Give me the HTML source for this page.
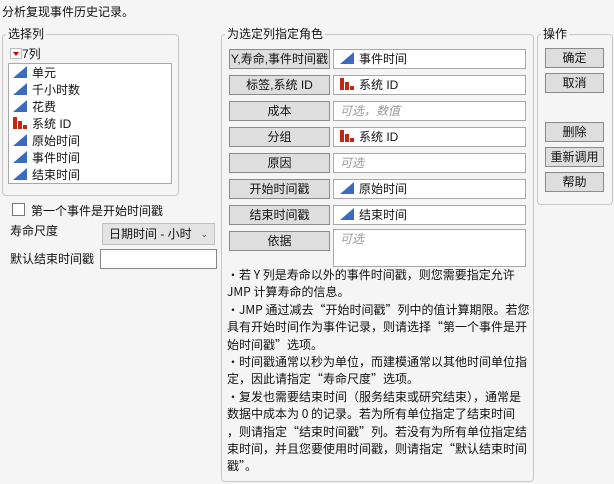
<!DOCTYPE html>
<html><head><meta charset="utf-8"><style>
*{box-sizing:border-box;margin:0;padding:0}
body{width:614px;height:484px;background:#f5f5f5;font-family:"Liberation Sans","Noto Sans CJK SC",sans-serif;font-size:12px;color:#111;position:relative;overflow:hidden}
.a{position:absolute;white-space:nowrap}
.frame{position:absolute;border:1px solid #c8c8c8;border-radius:4px}
.leg{position:absolute;background:#f5f5f5;padding:0 2px;line-height:14px}
.btn{position:absolute;background:#dedede;border:1px solid #8a8a8a;text-align:center;line-height:18px;white-space:nowrap;overflow:hidden}
.fld{position:absolute;background:#fff;border:1px solid #a8a8a8;line-height:18px;padding-left:6px;white-space:nowrap}
.ph{color:#999;font-style:italic}
.tri{display:inline-block;width:0;height:0;border-left:14px solid transparent;border-bottom:12px solid #3a6bbf;vertical-align:-1px;margin-right:5px}
.bar{display:inline-block;width:14px;height:12px;vertical-align:-1px;margin-right:5px;position:relative}
.bar i{position:absolute;bottom:0;background:#c8250e;width:4px}
.txt{position:absolute;left:227px;top:266px;line-height:17.4px;font-size:12px;white-space:nowrap;font-family:"Noto Sans CJK SC","Liberation Sans",sans-serif}
</style></head><body>
<div class="a" style="left:2px;top:3px">分析复现事件历史记录。</div>

<div class="frame" style="left:2px;top:34px;width:177px;height:162px"></div>
<div class="leg" style="left:6px;top:27px">选择列</div>
<div class="a" style="left:10px;top:45px"><span style="display:inline-block;width:12px;height:11px;border:1px solid #bbb;background:#fff;position:relative;vertical-align:-1px"><span style="position:absolute;left:2px;top:3px;border-left:3px solid transparent;border-right:3px solid transparent;border-top:4px solid #c00"></span></span>7列</div>
<div style="position:absolute;left:8px;top:63px;width:164px;height:121px;background:#fff;border:1px solid #a8a8a8"></div>
<div class="a" style="left:13px;top:65px;line-height:17px">
<div><span class="tri"></span>单元</div>
<div><span class="tri"></span>千小时数</div>
<div><span class="tri"></span>花费</div>
<div><span class="bar"><i style="left:0;height:12px"></i><i style="left:5px;height:8px"></i><i style="left:10px;height:4px"></i></span>系统 ID</div>
<div><span class="tri"></span>原始时间</div>
<div><span class="tri"></span>事件时间</div>
<div><span class="tri"></span>结束时间</div>
</div>

<div style="position:absolute;left:12px;top:203px;width:13px;height:13px;border:1px solid #777;background:#fff"></div>
<div class="a" style="left:31px;top:202px">第一个事件是开始时间戳</div>
<div class="a" style="left:10px;top:222px">寿命尺度</div>
<div style="position:absolute;left:102px;top:223px;width:113px;height:22px;background:#e3e3e3;border:1px solid #c0c0c0;line-height:20px;padding-left:6px;white-space:nowrap">日期时间 - 小时 <span style="position:absolute;right:6px;top:0;font-size:9px;color:#555">&#8964;</span></div>
<div class="a" style="left:10px;top:250px">默认结束时间戳</div>
<div style="position:absolute;left:100px;top:249px;width:117px;height:20px;background:#fff;border:1px solid #888"></div>

<div class="frame" style="left:221px;top:34px;width:313px;height:448px"></div>
<div class="leg" style="left:225px;top:27px">为选定列指定角色</div>
<div class="btn" style="left:229px;top:49px;width:101px;height:20px">Y,寿命,事件时间戳</div>
<div class="fld" style="left:333px;top:49px;width:193px;height:20px"><span class="tri"></span>事件时间</div>
<div class="btn" style="left:229px;top:75px;width:101px;height:20px">标签,系统 ID</div>
<div class="fld" style="left:333px;top:75px;width:193px;height:20px"><span class="bar"><i style="left:0;height:12px"></i><i style="left:5px;height:8px"></i><i style="left:10px;height:4px"></i></span>系统 ID</div>
<div class="btn" style="left:229px;top:101px;width:101px;height:20px">成本</div>
<div class="fld ph" style="left:333px;top:101px;width:193px;height:20px">可选，数值</div>
<div class="btn" style="left:229px;top:127px;width:101px;height:20px">分组</div>
<div class="fld" style="left:333px;top:127px;width:193px;height:20px"><span class="bar"><i style="left:0;height:12px"></i><i style="left:5px;height:8px"></i><i style="left:10px;height:4px"></i></span>系统 ID</div>
<div class="btn" style="left:229px;top:153px;width:101px;height:20px">原因</div>
<div class="fld ph" style="left:333px;top:153px;width:193px;height:20px">可选</div>
<div class="btn" style="left:229px;top:179px;width:101px;height:20px">开始时间戳</div>
<div class="fld" style="left:333px;top:179px;width:193px;height:20px"><span class="tri"></span>原始时间</div>
<div class="btn" style="left:229px;top:205px;width:101px;height:20px">结束时间戳</div>
<div class="fld" style="left:333px;top:205px;width:193px;height:20px"><span class="tri"></span>结束时间</div>
<div class="btn" style="left:229px;top:231px;width:101px;height:20px">依据</div>
<div class="fld ph" style="left:333px;top:229px;width:193px;height:38px">可选</div>

<div class="txt">•若 Y 列是寿命以外的事件时间戳，则您需要指定允许<br>JMP 计算寿命的信息。<br>•JMP 通过减去“开始时间戳”列中的值计算期限。若您<br>具有开始时间作为事件记录，则请选择“第一个事件是开<br>始时间戳”选项。<br>•时间戳通常以秒为单位，而建模通常以其他时间单位指<br>定，因此请指定“寿命尺度”选项。<br>•复发也需要结束时间（服务结束或研究结束），通常是<br>数据中成本为 0 的记录。若为所有单位指定了结束时间<br>，则请指定“结束时间戳”列。若没有为所有单位指定结<br>束时间，并且您要使用时间戳，则请指定“默认结束时间<br>戳”。</div>

<div class="frame" style="left:537px;top:34px;width:76px;height:171px"></div>
<div class="leg" style="left:541px;top:27px">操作</div>
<div class="btn" style="left:545px;top:48px;width:59px;height:20px">确定</div>
<div class="btn" style="left:545px;top:73px;width:59px;height:20px">取消</div>
<div class="btn" style="left:545px;top:122px;width:59px;height:20px">删除</div>
<div class="btn" style="left:545px;top:147px;width:59px;height:20px">重新调用</div>
<div class="btn" style="left:545px;top:172px;width:59px;height:20px">帮助</div>
</body></html>
